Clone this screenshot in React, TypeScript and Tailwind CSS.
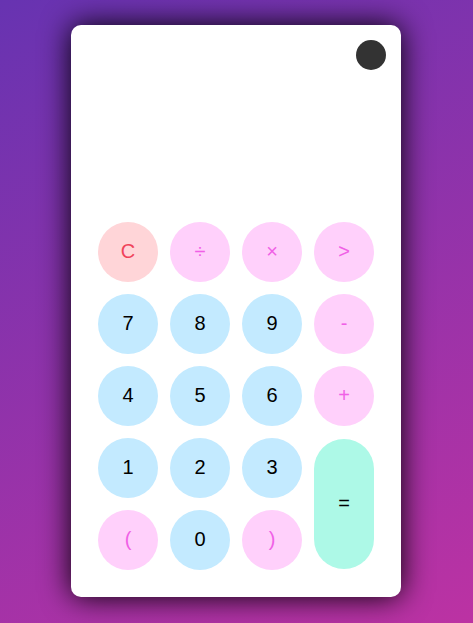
import { useState } from "react";

type Kind = "clear" | "operator" | "digit" | "equal";

interface Key {
  label: string;
  name: string;
  kind: Kind;
}

const kindClasses: Record<Kind, string> = {
  clear: "h-[60px] bg-[#ffd5d8] text-[#f0435a]",
  operator: "h-[60px] bg-[#ffd0fb] text-[#f060e6]",
  digit: "h-[60px] bg-[#c3eaff] text-black",
  equal: "row-span-2 h-[130px] self-center bg-[#adf9e7] text-black",
};

const digit = (label: string): Key => ({ label, name: label, kind: "digit" });
const operator = (label: string, name: string): Key => ({ label, name, kind: "operator" });

const keys: Key[] = [
  { label: "C", name: "Clear", kind: "clear" },
  operator("÷", "Divide"),
  operator("×", "Multiply"),
  operator(">", "Backspace"),
  digit("7"),
  digit("8"),
  digit("9"),
  operator("-", "Subtract"),
  digit("4"),
  digit("5"),
  digit("6"),
  operator("+", "Add"),
  digit("1"),
  digit("2"),
  digit("3"),
  { label: "=", name: "Equals", kind: "equal" },
  operator("(", "Open parenthesis"),
  digit("0"),
  operator(")", "Close parenthesis"),
];

export default function App() {
  const [expression, setExpression] = useState("");
  const [dark, setDark] = useState(false);

  const press = (key: Key) => {
    if (key.kind === "clear") setExpression("");
    else if (key.label === ">") setExpression((value) => value.slice(0, -1));
    else if (key.kind !== "equal") setExpression((value) => value + key.label);
  };

  return (
    <main className="flex min-h-screen items-center justify-center bg-[linear-gradient(155deg,#6733b1,#bc32a3)] pr-px pb-px font-['Liberation_Sans',Arial,sans-serif]">
      <section
        aria-label="Calculator"
        className={`flex w-full max-w-[330px] flex-col rounded-[10px] px-[27px] pt-[15px] pb-[27px] shadow-[0_0_30px_#000000] ${
          dark ? "bg-[#223344] text-white" : "bg-white text-black"
        }`}
      >
        <button
          type="button"
          aria-label="Toggle theme"
          aria-pressed={dark}
          onClick={() => setDark(!dark)}
          className={`-mr-3 size-[30px] self-end rounded-full ${dark ? "bg-white" : "bg-[#333333]"}`}
        />
        <output aria-label="Expression" className="flex h-[152px] items-end justify-end pb-5 text-2xl">
          {expression}
        </output>
        <div className="grid grid-cols-4 gap-3">
          {keys.map((key) => (
            <button
              key={key.name}
              type="button"
              aria-label={key.name}
              onClick={() => press(key)}
              className={`rounded-[30px] pb-0.5 text-xl leading-6 ${kindClasses[key.kind]}`}
            >
              {key.label}
            </button>
          ))}
        </div>
      </section>
    </main>
  );
}
